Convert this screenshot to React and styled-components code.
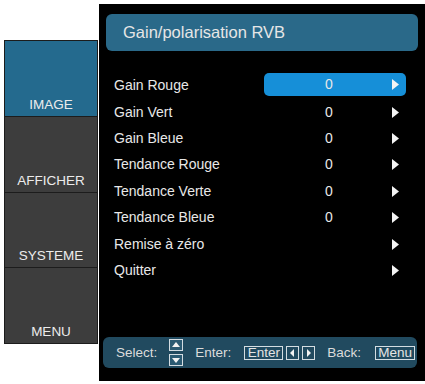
import React from 'react';
import styled, { createGlobalStyle } from 'styled-components';

const Global = createGlobalStyle`
  html, body {
    margin: 0;
    padding: 0;
    background: #ffffff;
    font-family: "Liberation Sans", Arial, sans-serif;
  }
`;

const Screen = styled.div`
  width: 425px;
  height: 384px;
  display: flex;
  align-items: flex-start;
  padding: 4px 0 0 4px;
  box-sizing: border-box;
`;

const Sidebar = styled.div`
  width: 94px;
  height: 304px;
  margin-top: 36px;
  margin-right: 1px;
  display: flex;
  flex-direction: column;
  gap: 1px;
  padding: 1px;
  box-sizing: border-box;
  background: #1c1c1c;
`;

const Tab = styled.div`
  flex: 1;
  display: flex;
  align-items: flex-end;
  justify-content: center;
  padding-bottom: 4px;
  box-sizing: border-box;
  background: ${({ $active }) => ($active ? '#246a8e' : '#3d3d3d')};
  color: #ececec;
  font-size: 13.5px;
  line-height: 15px;
`;

const Panel = styled.div`
  width: 326px;
  height: 377px;
  background: #000;
  display: flex;
  flex-direction: column;
  padding: 10px 7px 13px 7px;
  box-sizing: border-box;
`;

const Header = styled.div`
  height: 37px;
  border-radius: 6px;
  background: #2a6989;
  color: #e6e6e6;
  font-size: 16.5px;
  display: flex;
  align-items: center;
  padding-left: 17px;
`;

const List = styled.div`
  margin-top: 20px;
  display: flex;
  flex-direction: column;
`;

const Row = styled.div`
  height: 26.4px;
  display: grid;
  grid-template-columns: 150px 142px;
  align-items: center;
  padding-left: 8px;
  color: #e8e8e8;
  font-size: 14px;
`;

const Label = styled.div`
  line-height: 15px;
  margin-top: 3px;
`;

const Cell = styled.div`
  height: 23px;
  border-radius: 5px;
  background: ${({ $active }) => ($active ? '#168fd8' : 'transparent')};
  display: grid;
  grid-template-columns: 1fr 14px;
  align-items: center;
  margin-top: ${({ $active }) => ($active ? '0' : '3px')};
`;

const Value = styled.div`
  text-align: center;
  padding-left: 2px;
  line-height: 15px;
`;

const Arrow = styled.svg`
  width: 7px;
  height: 11px;
  display: block;
`;

const Footer = styled.div`
  margin-top: auto;
  margin-left: -3px;
  margin-right: 1px;
  height: 31px;
  border-radius: 6px;
  background: #214a5f;
  display: flex;
  align-items: center;
  padding-left: 13px;
  color: #dcdcdc;
  font-size: 13.5px;
`;

const Hint = styled.span`
  margin-right: ${({ $gap }) => $gap}px;
`;

const UpDown = styled.div`
  display: flex;
  flex-direction: column;
  gap: 3px;
  margin-right: 12px;
`;

const KeyIcon = styled.svg`
  display: block;
`;

const KeyBox = styled.div`
  height: 14px;
  box-sizing: border-box;
  border: 1px solid #d4dde2;
  font-size: 13.5px;
  line-height: 12px;
  padding: 0 2px;
  color: #e4e4e4;
  margin-right: ${({ $gap }) => $gap || 0}px;
  width: ${({ $w }) => $w}px;
  text-align: center;
`;

const ArrowKey = ({ dir, gap }) => {
  const pts = {
    up: '3,8 7,3 11,8',
    down: '3,4 7,9 11,4',
    left: '8,3 4,7 8,11',
    right: '5,3 9,7 5,11',
  }[dir];
  const tall = dir === 'up' || dir === 'down';
  const w = tall ? 14 : 13;
  const h = tall ? 12 : 14;
  return (
    <KeyIcon width={w} height={h} viewBox={`0 0 ${w} ${h}`} style={{ marginRight: gap || 0 }}>
      <rect x="0.5" y="0.5" width={w - 1} height={h - 1} fill={tall ? '#2b5a72' : '#214a5f'} stroke="#d4dde2" />
      <polygon points={pts} fill="#f2f2f2" />
    </KeyIcon>
  );
};

const rows = [
  { label: 'Gain Rouge', value: '0' },
  { label: 'Gain Vert', value: '0' },
  { label: 'Gain Bleue', value: '0' },
  { label: 'Tendance Rouge', value: '0' },
  { label: 'Tendance Verte', value: '0' },
  { label: 'Tendance Bleue', value: '0' },
  { label: 'Remise à zéro', value: '' },
  { label: 'Quitter', value: '' },
];

const tabs = ['IMAGE', 'AFFICHER', 'SYSTEME', 'MENU'];

export default function App() {
  return (
    <>
      <Global />
      <Screen>
        <Sidebar>
          {tabs.map((t, i) => (
            <Tab key={t} $active={i === 0}>{t}</Tab>
          ))}
        </Sidebar>
        <Panel>
          <Header>Gain/polarisation RVB</Header>
          <List>
            {rows.map((r, i) => (
              <Row key={r.label}>
                <Label>{r.label}</Label>
                <Cell $active={i === 0}>
                  <Value>{r.value}</Value>
                  <Arrow viewBox="0 0 7 11">
                    <polygon points="0,0 7,5.5 0,11" fill="#f4f4f4" />
                  </Arrow>
                </Cell>
              </Row>
            ))}
          </List>
          <Footer>
            <Hint $gap={12}>Select:</Hint>
            <UpDown>
              <ArrowKey dir="up" />
              <ArrowKey dir="down" />
            </UpDown>
            <Hint $gap={13}>Enter:</Hint>
            <KeyBox $w={39} $gap={3}>Enter</KeyBox>
            <ArrowKey dir="left" gap={3} />
            <ArrowKey dir="right" gap={12} />
            <Hint $gap={14}>Back:</Hint>
            <KeyBox $w={40}>Menu</KeyBox>
          </Footer>
        </Panel>
      </Screen>
    </>
  );
}
